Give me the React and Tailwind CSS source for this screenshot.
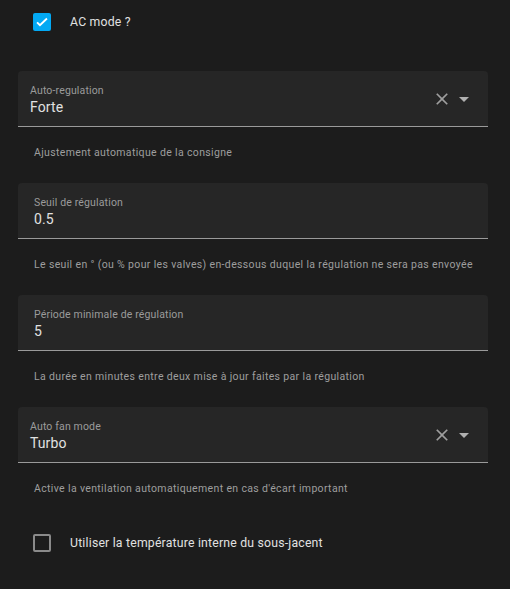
import React from "react";

const font = { fontFamily: "Roboto, 'Noto Sans', sans-serif" };

function CheckRow({ checked, label }) {
  return (
    <div className="flex items-center h-[44px] pl-[33px]">
      {checked ? (
        <div className="w-[18px] h-[18px] rounded-[2px] bg-[#03a9f4] flex items-center justify-center">
          <svg width="14" height="14" viewBox="0 0 24 24">
            <path d="M3.5 12.5l5 5L20.5 6" fill="none" stroke="#ffffff" strokeWidth="3.2" />
          </svg>
        </div>
      ) : (
        <div className="w-[18px] h-[18px] rounded-[2px] border-2 border-[#8a8a8a]" />
      )}
      <span className="ml-[19px] text-[12.25px] text-[#e1e1e1] tracking-[0.2px]">{label}</span>
    </div>
  );
}

function Field({ label, value, select, helper }) {
  return (
    <div>
      <div className="ml-[18px] mr-[22px] h-[56px] bg-[#262626] rounded-t-[4px] border-b border-[#9a9a9a] flex items-start">
        <div className={`flex-1 flex flex-col ${select ? "pl-[12px]" : "pl-[16px]"} pt-[13px]`}>
          <span className="text-[10.5px] leading-[14px] text-[#9b9b9b] tracking-[0.15px]">{label}</span>
          <span className="text-[14px] leading-[18px] text-[#e1e1e1] tracking-[0.1px]">{value}</span>
        </div>
        {select && (
          <div className="flex items-center pr-[12px] h-[55px]">
            <svg width="20" height="20" viewBox="0 0 24 24">
              <path
                d="M19 6.41L17.59 5 12 10.59 6.41 5 5 6.41 10.59 12 5 17.59 6.41 19 12 13.41 17.59 19 19 17.59 13.41 12z"
                fill="#9e9e9e"
              />
            </svg>
            <svg width="24" height="24" viewBox="0 0 24 24">
              <path d="M7 10l5 5 5-5z" fill="#b0b0b0" />
            </svg>
          </div>
        )}
      </div>
      <div className="h-[56px] pl-[34px] pt-[18px] text-[10.5px] leading-[16px] text-[#9e9e9e] tracking-[0.35px]">
        {helper}
      </div>
    </div>
  );
}

export default function App() {
  return (
    <div className="w-[510px] h-[589px] bg-[#1c1c1c] overflow-hidden" style={font}>
      <CheckRow checked label="AC mode ?" />
      <div className="h-[27px]" />
      <Field
        select
        label="Auto-regulation"
        value="Forte"
        helper="Ajustement automatique de la consigne"
      />
      <Field
        label="Seuil de régulation"
        value="0.5"
        helper="Le seuil en ° (ou % pour les valves) en-dessous duquel la régulation ne sera pas envoyée"
      />
      <Field
        label="Période minimale de régulation"
        value="5"
        helper="La durée en minutes entre deux mise à jour faites par la régulation"
      />
      <Field
        select
        label="Auto fan mode"
        value="Turbo"
        helper="Active la ventilation automatiquement en cas d'écart important"
      />
      <div className="h-[2px]" />
      <CheckRow label="Utiliser la température interne du sous-jacent" />
    </div>
  );
}
